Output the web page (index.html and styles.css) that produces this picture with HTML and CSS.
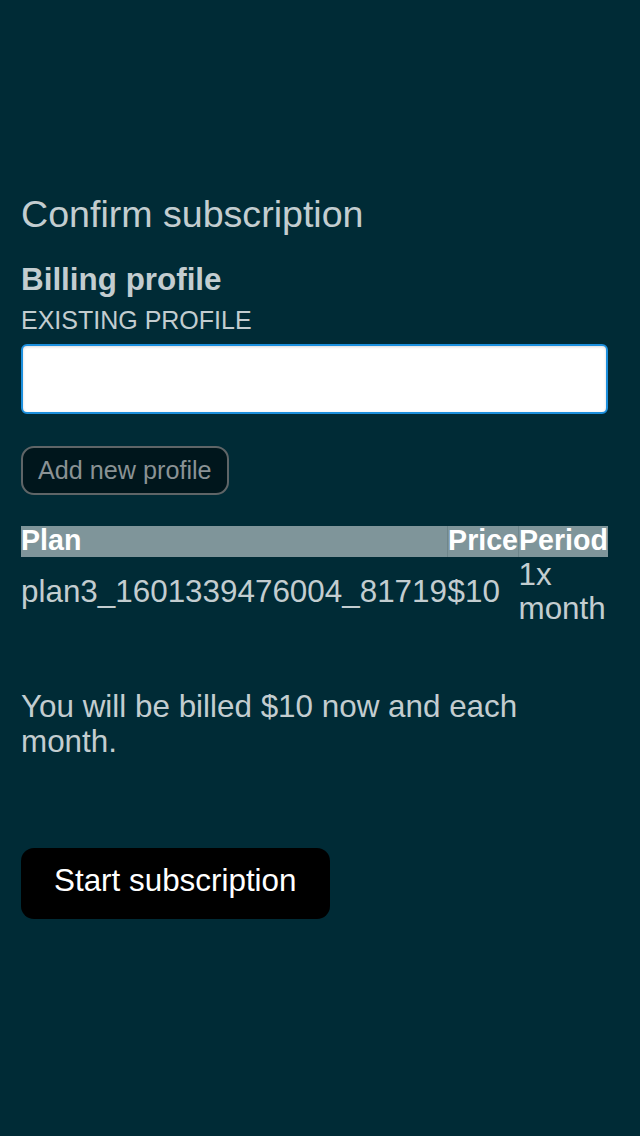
FILE: index.html
```html
<!DOCTYPE html>
<html>
<head>
<meta charset="utf-8">
<link rel="stylesheet" href="styles.css">
</head>
<body>
<main class="page">
  <h1 class="title">Confirm subscription</h1>
  <h2 class="section">Billing profile</h2>
  <label class="label">EXISTING PROFILE</label>
  <div class="select"></div>
  <button class="btn-secondary">Add new profile</button>
  <table class="plans">
    <thead>
      <tr><th class="col-plan">Plan</th><th class="col-price">Price</th><th class="col-period">Period</th></tr>
    </thead>
    <tbody>
      <tr><td>plan3_1601339476004_81719</td><td>$10</td><td>1x month</td></tr>
    </tbody>
  </table>
  <p class="note">You will be billed $10 now and each month.</p>
  <button class="btn-primary">Start subscription</button>
</main>
</body>
</html>
```
FILE: styles.css
```css
html, body {
  margin: 0;
  padding: 0;
  background: #002b36;
}
body {
  font-family: "Liberation Sans", Arial, sans-serif;
  color: #c3cdd0;
}
.page {
  padding: 193px 32px 0 21px;
  display: flex;
  flex-direction: column;
  align-items: flex-start;
}
.title {
  margin: 0;
  font-size: 37.6px;
  font-weight: normal;
  line-height: 43px;
}
.section {
  margin: 26px 0 0;
  font-size: 31.4px;
  font-weight: bold;
  line-height: 36px;
}
.label {
  margin-top: 8px;
  font-size: 25px;
  line-height: 29px;
}
.select {
  margin-top: 9px;
  width: 583px;
  height: 66px;
  background: #fff;
  border: 2px solid #1c8fdd;
  border-radius: 6px;
  box-shadow: inset 0 1px 3px rgba(0,0,0,0.15);
}
.btn-secondary {
  margin-top: 32px;
  height: 49px;
  padding: 0 15px;
  background: #00161c;
  border: 2px solid #5f6567;
  border-radius: 13px;
  color: #8a9294;
  font-family: inherit;
  font-size: 25.2px;
}
.plans {
  margin-top: 31px;
  width: 587px;
  border-collapse: collapse;
  font-size: 31.4px;
}
.plans th {
  background: #7f959a;
  color: #fff;
  font-size: 28.6px;
  font-weight: bold;
  text-align: left;
  padding: 0 0 3px;
  height: 28px;
  line-height: 28px;
  border-left: 1px solid #6f868b;
}
.plans th:first-child { border-left: none; }
.plans .col-price { width: 69px; }
.plans .col-period { width: 88px; }
.plans td {
  padding: 0;
  line-height: 34px;
  vertical-align: middle;
}
.plans tbody tr td { padding-top: 1px; }
.note {
  margin: 63px 0 0;
  font-size: 31.4px;
  line-height: 35px;
  width: 560px;
}
.btn-primary {
  margin-top: 89px;
  height: 71px;
  padding: 0 33px 5px;
  background: #000;
  color: #fff;
  border: none;
  border-radius: 13px;
  font-family: inherit;
  font-size: 31.4px;
}
```
